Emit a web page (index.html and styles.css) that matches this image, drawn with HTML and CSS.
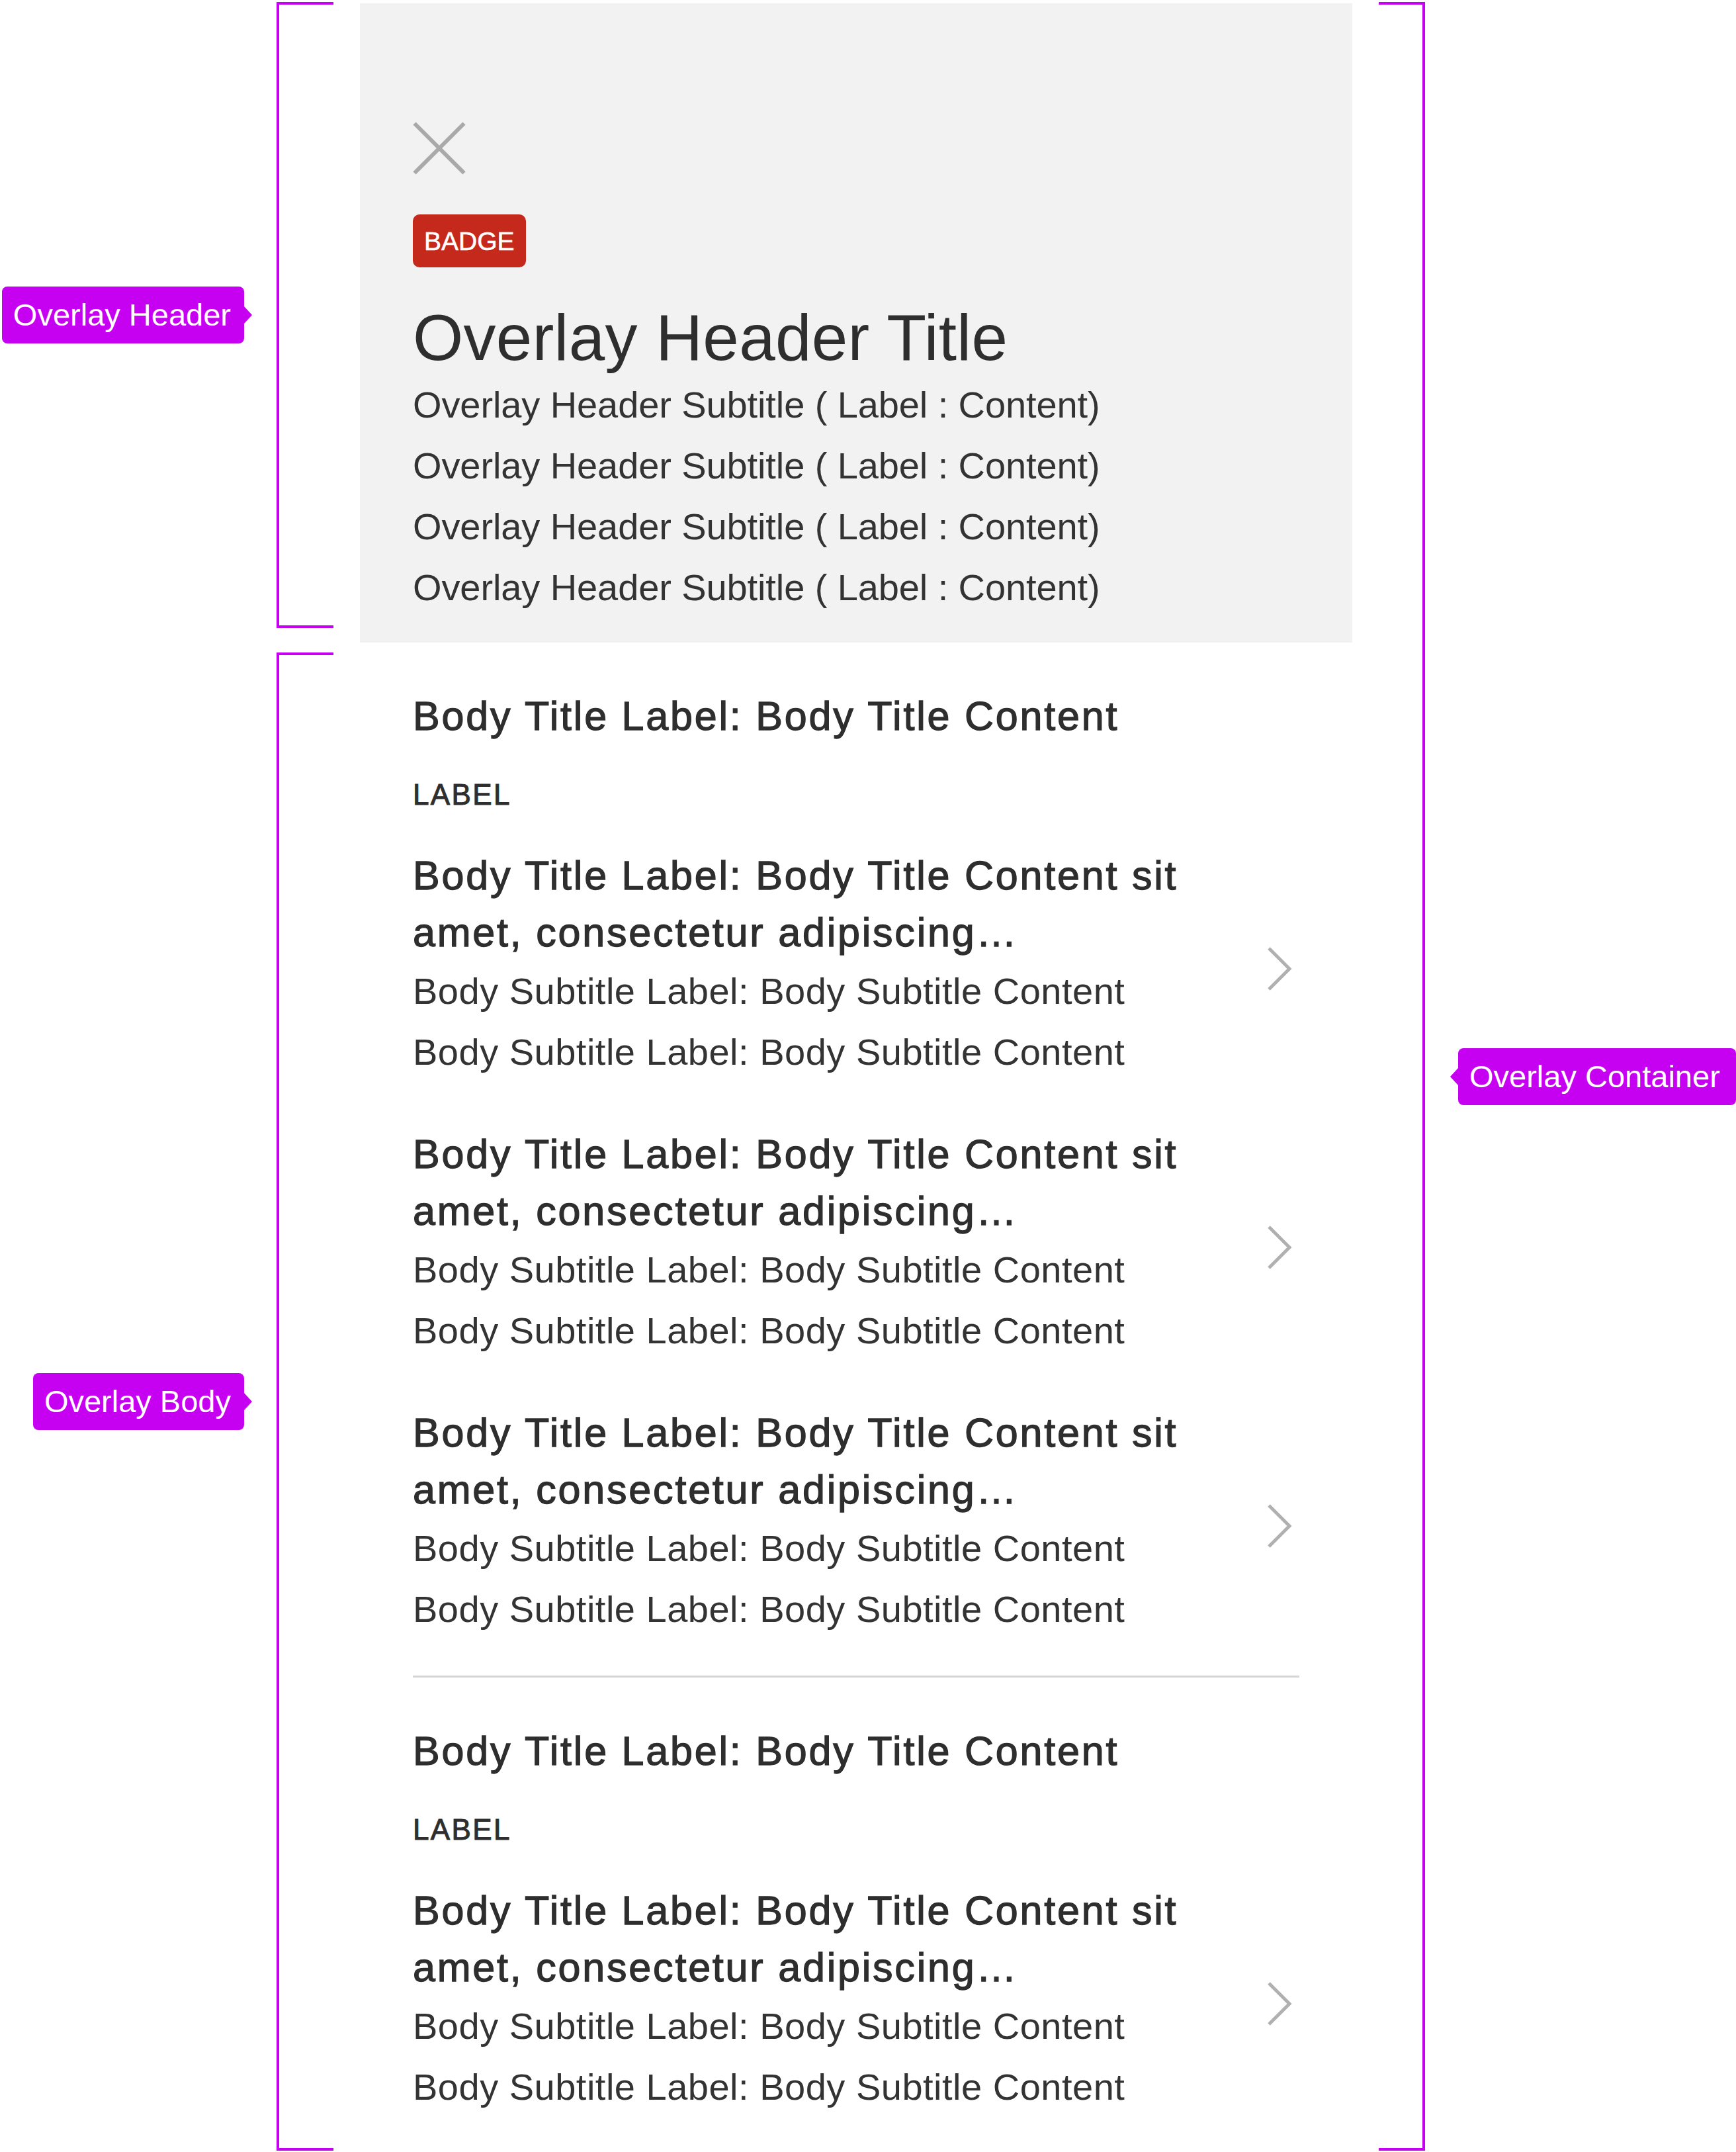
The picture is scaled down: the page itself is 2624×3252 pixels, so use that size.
FILE: index.html
```html
<!DOCTYPE html>
<html lang="en">
<head>
<meta charset="utf-8">
<title>Overlay anatomy</title>
<link rel="stylesheet" href="styles.css">
</head>
<body>
<div class="page">
  <div class="annot-col annot-col-left">
    <div class="annot annot-header">
      <span class="tag tag-point-right">Overlay Header</span>
      <span class="bracket bracket-open"></span>
    </div>
    <div class="annot annot-body">
      <span class="tag tag-point-right">Overlay Body</span>
      <span class="bracket bracket-open"></span>
    </div>
  </div>

  <div class="overlay">
    <header class="overlay-header">
      <button class="close-btn" type="button" aria-label="Close">
        <svg width="80" height="80" viewBox="0 0 80 80"><path d="M2.5 2.5 L77.5 77.5 M77.5 2.5 L2.5 77.5" stroke="#a9a9a9" stroke-width="6" fill="none"/></svg>
      </button>
      <span class="badge">BADGE</span>
      <h1 class="header-title">Overlay Header Title</h1>
      <p class="header-subtitle">Overlay Header Subtitle ( Label : Content)</p>
      <p class="header-subtitle">Overlay Header Subtitle ( Label : Content)</p>
      <p class="header-subtitle">Overlay Header Subtitle ( Label : Content)</p>
      <p class="header-subtitle">Overlay Header Subtitle ( Label : Content)</p>
    </header>

    <div class="overlay-body">
      <section class="body-section">
        <h2 class="body-title">Body Title Label: Body Title Content</h2>
        <div class="section-label">LABEL</div>
        <ul class="item-list">
          <li class="item">
            <div class="item-text">
              <div class="item-title">Body Title Label: Body Title Content sit amet, consectetur adipiscing…</div>
              <div class="item-subtitle">Body Subtitle Label: Body Subtitle Content</div>
              <div class="item-subtitle">Body Subtitle Label: Body Subtitle Content</div>
            </div>
            <svg class="chevron" width="40" height="68" viewBox="0 0 40 68"><polyline points="4,3 35,34 4,65" fill="none" stroke="#b0b0b0" stroke-width="5"/></svg>
          </li>
          <li class="item">
            <div class="item-text">
              <div class="item-title">Body Title Label: Body Title Content sit amet, consectetur adipiscing…</div>
              <div class="item-subtitle">Body Subtitle Label: Body Subtitle Content</div>
              <div class="item-subtitle">Body Subtitle Label: Body Subtitle Content</div>
            </div>
            <svg class="chevron" width="40" height="68" viewBox="0 0 40 68"><polyline points="4,3 35,34 4,65" fill="none" stroke="#b0b0b0" stroke-width="5"/></svg>
          </li>
          <li class="item">
            <div class="item-text">
              <div class="item-title">Body Title Label: Body Title Content sit amet, consectetur adipiscing…</div>
              <div class="item-subtitle">Body Subtitle Label: Body Subtitle Content</div>
              <div class="item-subtitle">Body Subtitle Label: Body Subtitle Content</div>
            </div>
            <svg class="chevron" width="40" height="68" viewBox="0 0 40 68"><polyline points="4,3 35,34 4,65" fill="none" stroke="#b0b0b0" stroke-width="5"/></svg>
          </li>
        </ul>
      </section>

      <section class="body-section body-section-last">
        <h2 class="body-title">Body Title Label: Body Title Content</h2>
        <div class="section-label">LABEL</div>
        <ul class="item-list">
          <li class="item">
            <div class="item-text">
              <div class="item-title">Body Title Label: Body Title Content sit amet, consectetur adipiscing…</div>
              <div class="item-subtitle">Body Subtitle Label: Body Subtitle Content</div>
              <div class="item-subtitle">Body Subtitle Label: Body Subtitle Content</div>
            </div>
            <svg class="chevron" width="40" height="68" viewBox="0 0 40 68"><polyline points="4,3 35,34 4,65" fill="none" stroke="#b0b0b0" stroke-width="5"/></svg>
          </li>
        </ul>
      </section>
    </div>
  </div>

  <div class="annot-col annot-col-right">
    <div class="annot annot-container">
      <span class="bracket bracket-close"></span>
      <span class="tag tag-point-left">Overlay Container</span>
    </div>
  </div>
</div>
</body>
</html>
```

FILE: styles.css
```css
html, body {
  margin: 0;
  padding: 0;
  background: #ffffff;
  overflow: hidden;
}

body {
  font-family: "Liberation Sans", Arial, Helvetica, sans-serif;
  color: #333333;
}

.page {
  display: flex;
  align-items: flex-start;
  padding-top: 3px;
  width: 2624px;
}

/* ---------- annotations ---------- */
.annot-col {
  flex-shrink: 0;
  display: flex;
  flex-direction: column;
}

.annot-col-left {
  width: 504px;
  gap: 37px;
}

.annot-col-right {
  flex: 1;
}

.annot {
  display: flex;
  align-items: center;
}

.annot-col-left .annot {
  justify-content: flex-end;
}

.annot-header {
  height: 946px;
}

.annot-body {
  height: 2264px;
}

.annot-container {
  height: 3247px;
}

.bracket {
  align-self: stretch;
  box-sizing: border-box;
  border: 4px solid #c600f1;
}

.bracket-open {
  width: 86px;
  border-right: 0;
  margin-left: 49px;
}

.bracket-close {
  width: 70px;
  border-left: 0;
  margin-right: 50px;
}

.tag {
  position: relative;
  display: block;
  height: 86px;
  line-height: 86px;
  padding: 0 20px 0 17px;
  font-size: 47px;
  color: #ffffff;
  background: #c600f1;
  border-radius: 8px;
  white-space: nowrap;
}

.annot-container .tag {
  flex: 1;
}

.tag-point-right::after {
  content: "";
  position: absolute;
  left: 100%;
  top: 50%;
  margin-top: -13px;
  border-left: 12px solid #c600f1;
  border-top: 13px solid transparent;
  border-bottom: 13px solid transparent;
}

.tag-point-left::before {
  content: "";
  position: absolute;
  right: 100%;
  top: 50%;
  margin-top: -13px;
  border-right: 12px solid #c600f1;
  border-top: 13px solid transparent;
  border-bottom: 13px solid transparent;
}

/* ---------- overlay ---------- */
.overlay {
  flex-shrink: 0;
  width: 1500px;
  margin: 2px 40px 0;
  background: #ffffff;
}

.overlay-header {
  background: #f2f2f2;
  padding: 179px 80px 37px;
}

.close-btn {
  display: block;
  width: 80px;
  height: 80px;
  padding: 0;
  margin: 0;
  border: 0;
  background: transparent;
}

.close-btn svg {
  display: block;
}

.badge {
  display: inline-block;
  margin-top: 60px;
  height: 80px;
  line-height: 82px;
  padding: 0 17px;
  font-size: 39px;
  color: #ffffff;
  background: #c4291c;
  border-radius: 10px;
  vertical-align: top;
  -webkit-text-stroke: 0.6px #ffffff;
}

.header-title {
  margin: 50px 0 0;
  font-size: 98px;
  line-height: 112px;
  font-weight: 400;
  letter-spacing: 0.3px;
  color: #2e2e2e;
}

.header-subtitle {
  margin: 0;
  font-size: 56px;
  line-height: 92px;
  letter-spacing: -0.1px;
  color: #333333;
}

.overlay-body {
  padding: 0 80px;
}

.body-section {
  padding: 71px 0 54px;
}

.body-section + .body-section {
  border-top: 3px solid #d5d5d5;
}

.body-section-last {
  padding-bottom: 50px;
}

.body-title {
  margin: 0;
  font-size: 61px;
  line-height: 80px;
  font-weight: 400;
  letter-spacing: 2.8px;
  -webkit-text-stroke: 1.3px #2e2e2e;
  color: #2e2e2e;
}

.section-label {
  margin-top: 49px;
  font-size: 44px;
  line-height: 60px;
  letter-spacing: 2.4px;
  -webkit-text-stroke: 1px #2e2e2e;
  color: #2e2e2e;
}

.item-list {
  list-style: none;
  margin: 49px 0 0;
  padding: 0;
  display: flex;
  flex-direction: column;
  gap: 65px;
}

.item {
  display: flex;
  align-items: center;
}

.item-text {
  flex: 1;
  min-width: 0;
}

.item-title {
  font-size: 61px;
  line-height: 86px;
  letter-spacing: 2.8px;
  -webkit-text-stroke: 1.3px #2e2e2e;
  color: #2e2e2e;
}

.item-subtitle {
  font-size: 56px;
  line-height: 92px;
  letter-spacing: 0.5px;
  color: #333333;
}

.chevron {
  flex-shrink: 0;
  display: block;
  margin: 12px 10px 0 0;
}
```
